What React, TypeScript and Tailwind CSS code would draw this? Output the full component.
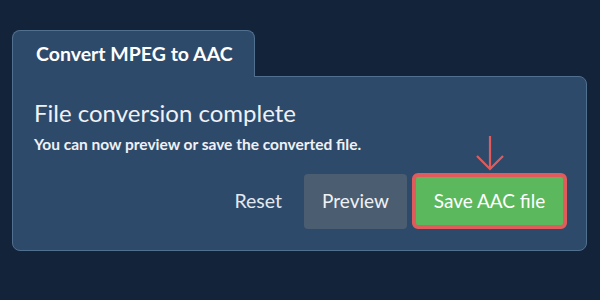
import React from "react"

export default function App() {
    return (
        <div className="w-[600px] h-[300px] bg-[#12233a] pt-[30px] pl-[12px]" style={{ fontFamily: "Lato, 'Noto Sans', sans-serif" }}>
            <div className="w-[575px] flex flex-col">
                {/* Tab */}
                <div className="relative z-10 -mb-px self-start h-[47px] w-[243px] bg-[#2e4a6b] border border-b-0 border-[#51708f] rounded-t-lg pl-[23px] flex items-center">
                    <span className="text-[19.5px] font-bold text-white">Convert MPEG to AAC</span>
                </div>
                {/* Panel */}
                <div className="h-[175px] bg-[#2e4a6b] border border-[#51708f] rounded-b-lg rounded-tr-lg pl-[21px] pr-[19px] pt-[20px]">
                    <h2 className="text-[24px] leading-[32px] text-[#eef1f5]">File conversion complete</h2>
                    <p className="mt-[4px] text-[15.5px] leading-[22px] font-bold text-[#eef1f5]">You can now preview or save the converted file.</p>
                    <div className="mt-[18px] flex justify-end items-center">
                        <button className="h-[55px] px-4 text-[19.5px] text-[#e2e8ef]">Reset</button>
                        <button className="ml-[6px] h-[55px] w-[103px] rounded bg-[#4b5d70] text-[19px] text-[#eef1f5]">Preview</button>
                        <div className="relative ml-[5px]">
                            <svg className="absolute left-1/2 -translate-x-1/2 -top-[38px]" width="30" height="36" viewBox="0 0 30 36" fill="none" stroke="#e05c5c" strokeWidth="2.2">
                                <path d="M15 1 V34" />
                                <path d="M2 21 L15 34 L28 21" />
                            </svg>
                            <button className="h-[56px] w-[155px] rounded-md border-4 border-[#e05c5c] bg-[#5cb85c] text-[19px] text-white">Save AAC file</button>
                        </div>
                    </div>
                </div>
            </div>
        </div>
    )
}
